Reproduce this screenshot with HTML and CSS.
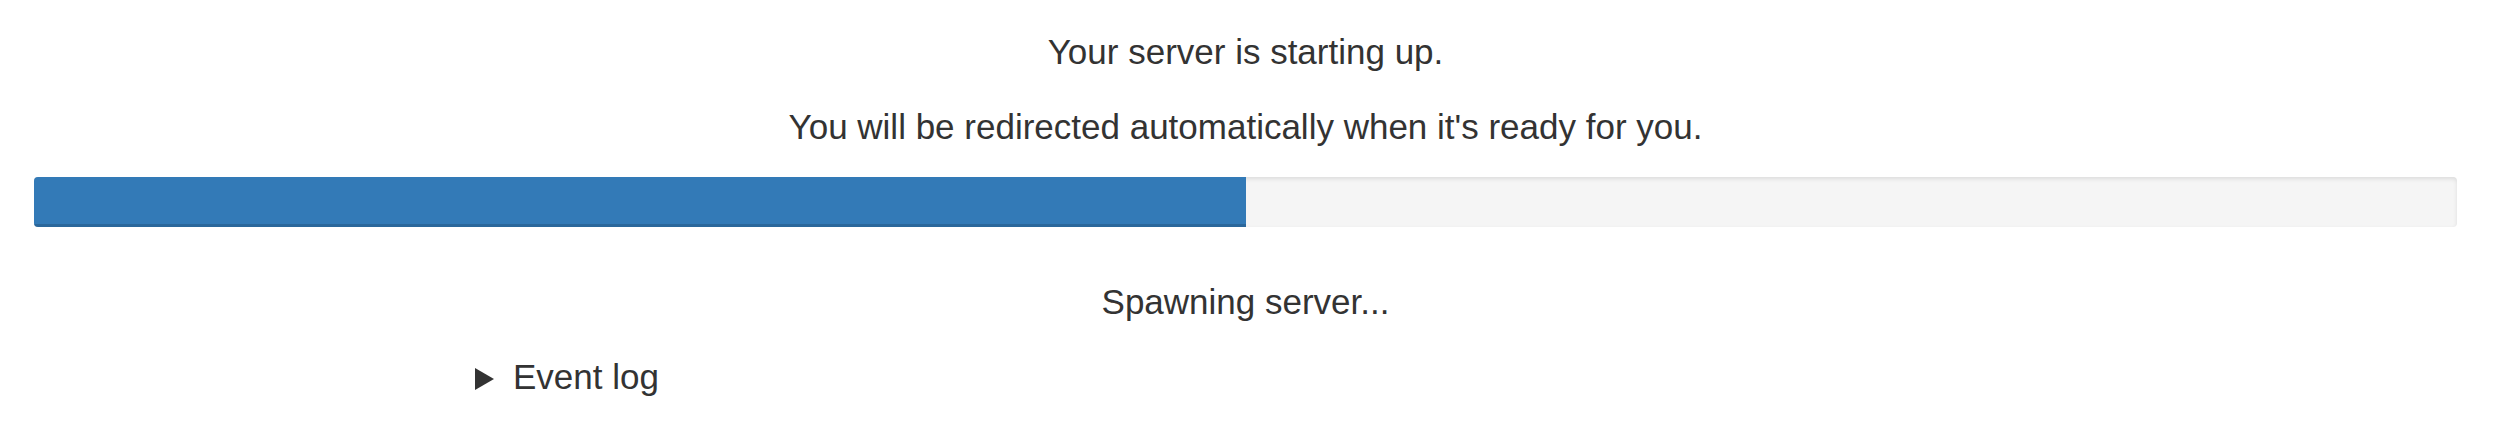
FILE: index.html
```html
<!DOCTYPE html>
<html lang="en">
<head>
<meta charset="utf-8">
<title>Server starting</title>
<link rel="stylesheet" href="styles.css">
</head>
<body>
<div class="container">
  <div class="text-center">
    <p>Your server is starting up.</p>
    <p>You will be redirected automatically when it's ready for you.</p>
    <div class="progress">
      <div class="progress-bar" style="width: 50%;"></div>
    </div>
    <p>Spawning server...</p>
  </div>
  <div class="log-col">
    <div class="summary">
      <svg class="marker" width="19" height="22" viewBox="0 0 19 22"><polygon points="0,0 19,11 0,22" fill="#333"/></svg>
      <span>Event log</span>
    </div>
  </div>
</div>
</body>
</html>
```

FILE: styles.css
```css
html, body {
  margin: 0;
  padding: 0;
  background: #fff;
}
body {
  font-family: "Liberation Sans", Arial, Helvetica, sans-serif;
  font-size: 35px;
  line-height: 50px;
  color: #333;
}
.container {
  padding: 27px 37px 0 34px;
}
.text-center {
  text-align: center;
}
p {
  margin: 0 0 25px;
}
.progress {
  height: 50px;
  margin-bottom: 50px;
  background: #f5f5f5;
  border-radius: 4px;
  overflow: hidden;
  box-shadow: inset 0 2px 4px rgba(0, 0, 0, 0.1);
  display: flex;
}
.progress-bar {
  height: 100%;
  background: #337ab7;
  box-shadow: inset 0 -3px 0 rgba(0, 0, 0, 0.15);
}
.log-col {
  padding-left: 441px;
}
.summary {
  display: flex;
  align-items: center;
  gap: 19px;
}
.marker {
  display: block;
  margin-top: 3px;
}
```
